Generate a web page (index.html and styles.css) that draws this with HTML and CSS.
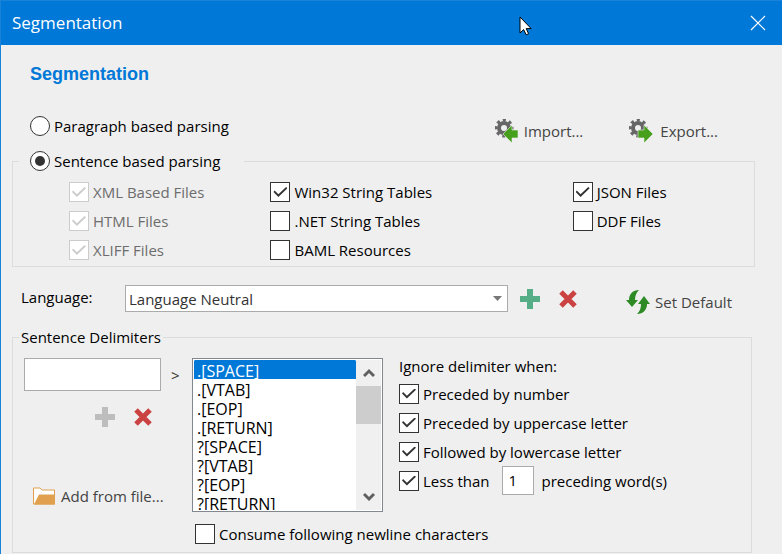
FILE: index.html
```
<!DOCTYPE html>
<html lang="en">
<head>
    <meta charset="UTF-8">
    <meta name="viewport" content="width=device-width, initial-scale=1.0">
    <title>Segmentation</title>
    <link rel="stylesheet" href="styles.css">
</head>
<body>
    <div class="window">
        <header class="titlebar">
            <span>Segmentation</span>
            <button type="button" class="icon-btn" aria-label="Close">
                <svg width="16" height="16" viewBox="0 0 16 16"><path d="M1 1L15 15M15 1L1 15" stroke="#fff" stroke-width="1.2"/></svg>
            </button>
            <svg class="cursor" width="13" height="20" viewBox="0 0 13 20"><path d="M1 1V17L4.6 13.5L7.2 18.8L9.6 17.7L7.2 12.6H12.2Z" fill="#fff" stroke="#000"/></svg>
        </header>

        <main>
            <h1>Segmentation</h1>

            <div class="top-row">
                <label class="option"><input type="radio" name="parsing">Paragraph based parsing</label>
                <div class="actions">
                    <button type="button" class="text-btn">
                        <svg width="24" height="24" viewBox="0 0 24 24">
                            <circle cx="9" cy="9" r="5" fill="none" stroke="#666" stroke-width="4"/>
                            <circle cx="9" cy="9" r="8" fill="none" stroke="#666" stroke-width="3" stroke-dasharray="3.1 3.183" stroke-dashoffset="1.5"/>
                            <path d="M8 15L17 6V11H23V19H17V24Z" fill="#46a01c" stroke="#efefef" stroke-width="0.6"/>
                        </svg>
                        Import...
                    </button>
                    <button type="button" class="text-btn export">
                        <svg width="24" height="24" viewBox="0 0 24 24">
                            <circle cx="9" cy="9" r="5" fill="none" stroke="#666" stroke-width="4"/>
                            <circle cx="9" cy="9" r="8" fill="none" stroke="#666" stroke-width="3" stroke-dasharray="3.1 3.183" stroke-dashoffset="1.5"/>
                            <path d="M24 15L15 6V11H9V19H15V24Z" fill="#46a01c" stroke="#efefef" stroke-width="0.6"/>
                        </svg>
                        Export...
                    </button>
                </div>
            </div>

            <fieldset class="parsing">
                <legend><label class="option"><input type="radio" name="parsing" checked>Sentence based parsing</label></legend>
                <div class="file-types">
                    <label class="option disabled"><input type="checkbox" checked disabled>XML Based Files</label>
                    <label class="option"><input type="checkbox" checked>Win32 String Tables</label>
                    <label class="option"><input type="checkbox" checked>JSON Files</label>
                    <label class="option disabled"><input type="checkbox" checked disabled>HTML Files</label>
                    <label class="option"><input type="checkbox">.NET String Tables</label>
                    <label class="option"><input type="checkbox">DDF Files</label>
                    <label class="option disabled"><input type="checkbox" checked disabled>XLIFF Files</label>
                    <label class="option"><input type="checkbox">BAML Resources</label>
                </div>
            </fieldset>

            <div class="language-row">
                <label for="language">Language:</label>
                <select id="language" class="combo">
                    <option>Language Neutral</option>
                </select>
                <button type="button" class="icon-btn" aria-label="Add language">
                    <svg width="20" height="20" viewBox="0 0 20 20"><path d="M7 0H13V7H20V13H13V20H7V13H0V7H7Z" fill="#56ae87"/></svg>
                </button>
                <button type="button" class="icon-btn" aria-label="Remove language">
                    <svg width="20" height="20" viewBox="0 0 20 20"><path d="M3 3L17 17M17 3L3 17" stroke="#cb4242" stroke-width="5"/></svg>
                </button>
                <button type="button" class="text-btn set-default">
                    <svg width="24" height="24" viewBox="0 0 24 24" fill="#2d8a24">
                        <path d="M13 0C7 0 3 4 3 10H0L6 17L12 10H9C9 6 10 3 13 0Z"/>
                        <path d="M11 24C17 24 21 20 21 14H24L18 6L12 14H15C15 18 14 21 11 24Z"/>
                    </svg>
                    Set Default
                </button>
            </div>

            <fieldset class="delimiters">
                <legend>Sentence Delimiters</legend>
                <div class="delimiter-grid">
                    <div class="entry">
                        <div class="entry-row">
                            <input type="text" class="field" aria-label="New delimiter">
                            <span>&gt;</span>
                        </div>
                        <div class="entry-buttons">
                            <button type="button" class="icon-btn" aria-label="Add delimiter" disabled>
                                <svg width="20" height="20" viewBox="0 0 20 20"><path d="M7 0H13V7H20V13H13V20H7V13H0V7H7Z" fill="#bdbdbd"/></svg>
                            </button>
                            <button type="button" class="icon-btn" aria-label="Remove delimiter">
                                <svg width="20" height="20" viewBox="0 0 20 20"><path d="M3 3L17 17M17 3L3 17" stroke="#cb4242" stroke-width="5"/></svg>
                            </button>
                        </div>
                        <button type="button" class="text-btn add-file">
                            <svg width="23" height="18" viewBox="0 0 23 18">
                                <path d="M0.5 17V1H7L9 3H21.5V17Z" fill="#fff" stroke="#e0a04e"/>
                                <path d="M1 17.5L6 7.5H22V17.5Z" fill="#e0a04e"/>
                            </svg>
                            Add from file...
                        </button>
                    </div>

                    <div class="listbox">
                        <select size="8" aria-label="Delimiters">
                            <option selected>.[SPACE]</option>
                            <option>.[VTAB]</option>
                            <option>.[EOP]</option>
                            <option>.[RETURN]</option>
                            <option>?[SPACE]</option>
                            <option>?[VTAB]</option>
                            <option>?[EOP]</option>
                            <option>?[RETURN]</option>
                        </select>
                        <div class="scrollbar">
                            <button type="button" class="icon-btn" aria-label="Scroll up">
                                <svg width="12" height="10" viewBox="0 0 12 10"><path d="M1 8L6 3L11 8" fill="none" stroke="#606060" stroke-width="3"/></svg>
                            </button>
                            <div class="thumb"></div>
                            <button type="button" class="icon-btn" aria-label="Scroll down">
                                <svg width="12" height="10" viewBox="0 0 12 10"><path d="M1 2L6 7L11 2" fill="none" stroke="#606060" stroke-width="3"/></svg>
                            </button>
                        </div>
                    </div>

                    <div class="ignore">
                        <div>Ignore delimiter when:</div>
                        <label class="option"><input type="checkbox" checked>Preceded by number</label>
                        <label class="option"><input type="checkbox" checked>Preceded by uppercase letter</label>
                        <label class="option"><input type="checkbox" checked>Followed by lowercase letter</label>
                        <div class="word-count">
                            <label class="option"><input type="checkbox" checked>Less than</label>
                            <input type="text" class="field" id="words" value="1">
                            <label for="words">preceding word(s)</label>
                        </div>
                    </div>

                    <label class="option consume"><input type="checkbox">Consume following newline characters</label>
                </div>
            </fieldset>
        </main>
    </div>
</body>
</html>
```
FILE: styles.css
```
* {
    box-sizing: border-box;
}
body {
    margin: 0;
    padding: 0 1px 1px 0;
    background-color: #fff;
    font-family: "Open Sans", "Noto Sans", sans-serif;
    font-size: 15px;
    line-height: 20px;
    color: #000;
}
button, input, select {
    font: inherit;
    color: inherit;
    margin: 0;
}
svg {
    display: block;
    flex: none;
}
.window {
    background-color: #efefef;
    border-left: 1px solid #1883d9;
}

/* Title bar */
.titlebar {
    position: relative;
    display: flex;
    align-items: center;
    justify-content: space-between;
    height: 45px;
    padding: 0 16px 0 11px;
    border-top: 1px solid #1883d9;
    background-color: #0078d7;
    color: #fff;
    font-size: 17px;
}
.cursor {
    position: absolute;
    left: 518px;
    top: 15px;
}

main {
    padding: 19px 27px 1px 11px;
}
h1 {
    margin: 0 0 32px 18px;
    font-family: "Liberation Sans", Arial, sans-serif;
    font-size: 18px;
    line-height: 20px;
    color: #0078d7;
}

/* Buttons */
.icon-btn, .text-btn {
    display: flex;
    align-items: center;
    padding: 0;
    border: none;
    background: none;
}
.text-btn {
    gap: 5px;
    color: #444;
    white-space: nowrap;
}

/* Radio buttons and checkboxes */
.option {
    display: flex;
    align-items: center;
    gap: 4px;
    white-space: nowrap;
}
.option input {
    appearance: none;
    display: grid;
    place-items: center;
    flex: none;
    width: 20px;
    height: 20px;
    border: 1px solid #333;
    background-color: #fff;
}
.option input[type="radio"] {
    border-radius: 50%;
}
.option input[type="radio"]:checked::before {
    content: "";
    width: 10px;
    height: 10px;
    border-radius: 50%;
    background-color: #333;
}
.option input[type="checkbox"]:checked::before {
    content: "";
    width: 14px;
    height: 10px;
    background-color: #333;
    clip-path: polygon(0 50%, 8% 36%, 35% 72%, 90% 0, 100% 12%, 35% 100%);
}
.disabled {
    color: #6d6d6d;
}
.option input:disabled {
    border-color: #ccc;
}
.option input[type="checkbox"]:disabled::before {
    background-color: #ccc;
}

.top-row {
    display: flex;
    justify-content: space-between;
    align-items: flex-start;
    padding: 0 37px 5px 18px;
}
.actions {
    display: flex;
    gap: 46px;
}
.actions .text-btn {
    height: 30px;
}
.actions .export {
    gap: 7px;
}

/* Group boxes */
fieldset {
    min-width: 0;
    margin: 0;
    border: 1px solid #dcdcdc;
}
.parsing {
    padding: 11px 0 6px 56px;
}
.parsing legend {
    margin-left: -50px;
    padding: 0 24px 0 11px;
}
.file-types {
    display: grid;
    grid-template-columns: 10fr 15fr 9fr;
    row-gap: 9px;
}

.language-row {
    display: flex;
    align-items: flex-start;
    height: 42px;
    margin-top: 18px;
    padding: 0 23px 0 9px;
}
.language-row > label {
    flex: none;
    width: 104px;
    line-height: 24px;
}
.language-row .icon-btn {
    height: 27px;
    margin-left: 12px;
}
.language-row .icon-btn + .icon-btn {
    margin-left: 18px;
}
.language-row .set-default {
    height: 34px;
    margin-left: 48px;
}
.combo {
    appearance: none;
    flex: 1;
    min-width: 0;
    height: 27px;
    padding: 0 20px 0 3px;
    border: 1px solid #ababab;
    border-radius: 0;
    color: #333;
    background: #fff url("data:image/svg+xml,%3Csvg xmlns='http://www.w3.org/2000/svg' width='9' height='5'%3E%3Cpath d='M0 0H9L4.5 5Z' fill='%23777'/%3E%3C/svg%3E") no-repeat right 5px center;
}

/* Sentence delimiters */
.delimiters {
    margin-right: 3px;
    padding: 11px 11px 8px;
}
.delimiters legend {
    margin-left: -5px;
    padding: 0 2px;
}
.delimiter-grid {
    display: grid;
    grid-template-columns: 168px 191px 1fr;
    row-gap: 12px;
}
.field {
    border: 1px solid #ababab;
    border-radius: 0;
    background-color: #fff;
}
.entry {
    display: flex;
    flex-direction: column;
}
.entry-row {
    display: flex;
    align-items: center;
    gap: 10px;
    color: #333;
}
.entry-row .field {
    width: 137px;
    height: 33px;
}
.entry-buttons {
    display: flex;
    gap: 18px;
    margin: 16px 0 0 71px;
}
.add-file {
    align-self: flex-start;
    margin: auto 0 6px 9px;
}
.listbox {
    display: flex;
    height: 154px;
    padding: 1px;
    border: 1px solid #828790;
    background-color: #fff;
    overflow: hidden;
}
.listbox select {
    flex: 1;
    min-width: 0;
    height: 150px;
    padding: 0;
    border: none;
    outline: none;
    font-size: 16px;
    background-color: #fff;
    overflow: hidden;
}
.listbox option {
    height: 19px;
    min-height: 19px;
    padding: 0 3px;
    line-height: 17px;
}
.listbox option:checked {
    color: #fff;
    background: #0078d7 linear-gradient(#0078d7, #0078d7);
}
.scrollbar {
    display: flex;
    flex-direction: column;
    width: 25px;
    background-color: #f0f0f0;
}
.scrollbar .icon-btn {
    justify-content: center;
    height: 26px;
}
.scrollbar .thumb {
    height: 38px;
    margin-bottom: auto;
    background-color: #cdcdcd;
}
.ignore {
    padding-left: 16px;
}
.ignore > .option, .word-count {
    height: 29px;
}
.ignore > div:first-child {
    height: 21px;
    line-height: 16px;
}
.word-count {
    display: flex;
    align-items: center;
    gap: 8px;
}
.word-count .field {
    width: 32px;
    height: 29px;
    margin-left: 4px;
    padding: 0 6px 2px;
}
.consume {
    grid-column: 2 / 4;
    padding-left: 3px;
}
```
